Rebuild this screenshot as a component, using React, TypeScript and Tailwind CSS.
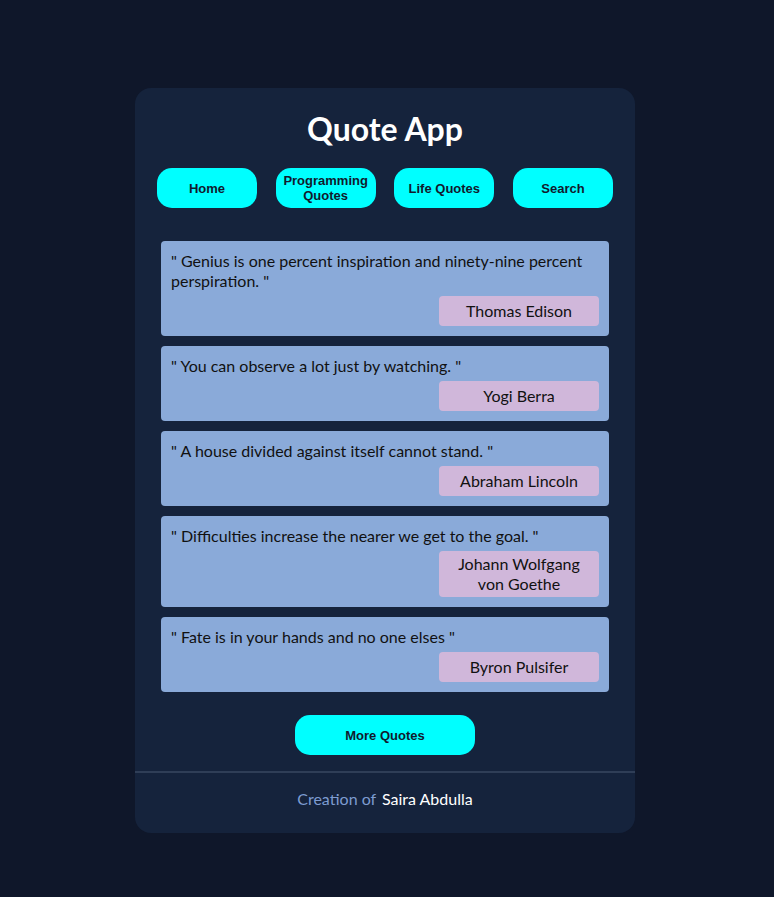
import React from "react";

const quotes = [
  { text: "Genius is one percent inspiration and ninety-nine percent perspiration.", author: "Thomas Edison" },
  { text: "You can observe a lot just by watching.", author: "Yogi Berra" },
  { text: "A house divided against itself cannot stand.", author: "Abraham Lincoln" },
  { text: "Difficulties increase the nearer we get to the goal.", author: "Johann Wolfgang von Goethe" },
  { text: "Fate is in your hands and no one elses", author: "Byron Pulsifer" },
];

const navItems = ["Home", "Programming Quotes", "Life Quotes", "Search"];

const btn =
  "bg-[#00ffff] text-[#111a2e] rounded-[15px] font-bold text-[13px] leading-[15px] [font-family:'Liberation_Sans',Arial,sans-serif]";

export default function App() {
  return (
    <div className="min-h-[897px] bg-[#0f172a] flex justify-center pt-[88px] pr-[4px] [font-family:Lato,'Noto_Sans',sans-serif]">
      <div className="w-[500px] h-[745px] bg-[#15233c] rounded-[16px] flex flex-col">
        <h1 className="text-white text-[32px] font-bold text-center leading-[40px] mt-[21px]">Quote App</h1>

        {/* botões de navegação */}
        <nav className="flex justify-between px-[22px] mt-[19px]">
          {navItems.map((item) => (
            <button key={item} className={`${btn} w-[100px] h-[40px] px-1`}>
              {item}
            </button>
          ))}
        </nav>

        {/* lista de citações */}
        <div className="flex flex-col gap-[10px] px-[26px] mt-[33px]">
          {quotes.map((q) => (
            <div key={q.author} className="bg-[#8aaad9] rounded-[4px] p-[10px] flex flex-col">
              <p className="text-[#111] text-[16px] leading-[20px]">" {q.text} "</p>
              <div className="self-end mt-[5px] w-[160px] min-h-[30px] bg-[#d0b7da] rounded-[4px] text-[#111] text-[16px] leading-[20px] py-[3px] px-3 flex items-center justify-center text-center">
                {q.author}
              </div>
            </div>
          ))}
        </div>

        <div className="flex justify-center mt-[23px]">
          <button className={`${btn} w-[180px] h-[40px]`}>More Quotes</button>
        </div>

        <div className="border-t-2 border-[#2f3e57] mt-[16px] flex-1 flex items-center justify-center pb-[9px]">
          <p className="text-[16px]">
            <span className="text-[#7d9cd1]">Creation of</span>{" "}
            <span className="text-white ml-[2px]">Saira Abdulla</span>
          </p>
        </div>
      </div>
    </div>
  );
}
